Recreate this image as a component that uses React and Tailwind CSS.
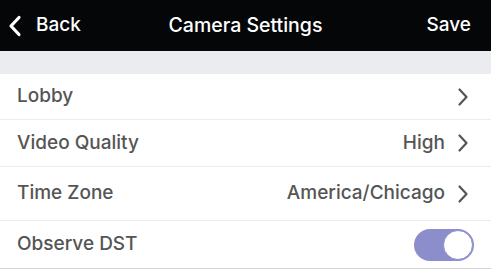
import React from "react";

const Chevron = () => (
  <svg width="12" height="20" viewBox="0 0 12 20" className="ml-[12px]">
    <path d="M2.5 2.5 L9.5 10 L2.5 17.5" fill="none" stroke="#555" strokeWidth="2.2" strokeLinecap="round" strokeLinejoin="round" />
  </svg>
);

const Row = ({ label, value, chevron, toggle, h, last }) => (
  <div
    className={`flex items-center justify-between pl-[17px] pr-[22px] bg-white border-b ${last ? "border-[#d6d6d6]" : "border-[#ececec]"}`}
    style={{ height: h }}
  >
    <span className="text-[19px] font-medium text-[#555555]">{label}</span>
    <div className="flex items-center">
      {value && <span className="text-[19px] font-medium text-[#555555]">{value}</span>}
      {chevron && <Chevron />}
      {toggle && (
        <div className="w-[60px] h-[32px] rounded-full bg-[#8c8dcb] flex items-center justify-end pr-[1px] -mr-[5px]">
          <div className="w-[30px] h-[30px] rounded-full bg-white border-[1.5px] border-[#8c8dcb]" />
        </div>
      )}
    </div>
  </div>
);

export default function App() {
  return (
    <div className="w-[491px] h-[274px] bg-white overflow-hidden" style={{ fontFamily: "Inter, 'Noto Sans', sans-serif" }}>
      <div className="h-[51px] bg-[#040608] grid grid-cols-[1fr_auto_1fr] items-center px-[8px] text-white">
        <div className="flex items-center">
          <svg width="14" height="22" viewBox="0 0 14 22" className="mr-[14px]">
            <path d="M11 2.5 L3 11 L11 19.5" fill="none" stroke="white" strokeWidth="3.2" strokeLinecap="round" strokeLinejoin="round" />
          </svg>
          <span className="text-[19px] font-medium">Back</span>
        </div>
        <span className="text-[19.5px] font-medium">Camera Settings</span>
        <span className="text-[19px] font-medium pr-[12px] justify-self-end">Save</span>
      </div>
      <div className="h-[23px] bg-[#ebecf0]" />
      <Row label="Lobby" chevron h={46} />
      <Row label="Video Quality" value="High" chevron h={47} />
      <Row label="Time Zone" value="America/Chicago" chevron h={54} />
      <Row label="Observe DST" toggle h={48} last />
    </div>
  );
}
